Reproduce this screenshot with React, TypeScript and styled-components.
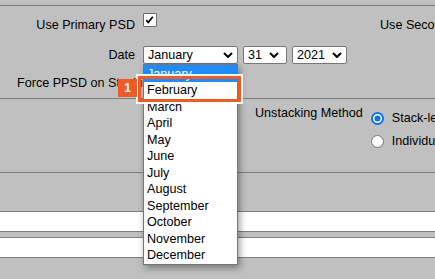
import React from 'react';
import styled, { createGlobalStyle } from 'styled-components';

const Global = createGlobalStyle`
  html, body { margin: 0; padding: 0; background: #c0c0c0; }
  body {
    font-family: "Liberation Sans", Arial, sans-serif;
    font-size: 12.6px;
    color: #000;
  }
  * { box-sizing: border-box; }
`;

const Page = styled.div`
  position: relative;
  width: 435px;
  height: 279px;
  overflow: hidden;
  padding-top: 5px;
`;

const Section = styled.section<{ $h: number }>`
  border-top: 1px solid #7d7d7d;
  height: ${p => p.$h}px;
`;

const TopSection = styled(Section)`
  padding-top: 7px;
`;

const Row1 = styled.div`
  display: grid;
  grid-template-columns: 135px 229px auto;
  column-gap: 8px;
  align-items: start;
  white-space: nowrap;
`;

const Label = styled.div`
  line-height: 15px;
  padding-top: ${p => (p as any).$pt ?? 0}px;
  text-align: right;
  white-space: nowrap;
`;

const TopLabel = styled(Label)`
  padding-top: 5px;
`;

const SideLabel = styled.div`
  line-height: 15px;
  padding-top: 5px;
  white-space: nowrap;
`;

const CheckBox = styled.span`
  display: block;
  width: 14px;
  height: 14px;
  background: #fff;
  border: 1px solid #6d6d6d;
  border-radius: 1px;
  svg { display: block; }
`;

const Row2 = styled.div`
  margin-top: 13px;
  display: grid;
  grid-template-columns: 135px auto;
  column-gap: 8px;
  align-items: center;
`;

const Selects = styled.div`
  display: flex;
  gap: 5px;
`;

const SelectWrap = styled.div`
  position: relative;
`;

const SelectBox = styled.div<{ $w: number; $gap: number }>`
  width: ${p => p.$w}px;
  height: 18px;
  background: #fff;
  border: 1px solid #767676;
  border-radius: 2px;
  padding: 0 ${p => p.$gap}px 0 4px;
  display: flex;
  align-items: center;
  justify-content: space-between;
  line-height: 15px;
  svg { display: block; flex: none; }
`;

const Row3 = styled.div`
  margin-top: 12px;
  padding-left: 17px;
  line-height: 15px;
  white-space: nowrap;
`;

const List = styled.ul`
  position: absolute;
  z-index: 5;
  top: 18px;
  left: 0;
  width: 95px;
  margin: 0;
  padding: 0 0 1px 0;
  list-style: none;
  background: #fff;
  border: 1px solid #767676;
  box-shadow: 2px 3px 7px rgba(0, 0, 0, 0.38);
`;

const Item = styled.li<{ $sel?: boolean }>`
  height: 16.53px;
  line-height: 16.53px;
  padding: 0.6px 0 0 3px;
  white-space: nowrap;
  background: ${p => (p.$sel ? '#1e8cff' : 'transparent')};
  color: ${p => (p.$sel ? '#fff' : '#000')};
`;

const MiddleSection = styled(Section)`
  display: flex;
  align-items: flex-start;
  padding: 7px 0 0 255px;
`;

const MethodLabel = styled.div`
  line-height: 15px;
  white-space: nowrap;
`;

const RadioGroup = styled.div`
  margin: 1px 0 0 8px;
  display: flex;
  flex-direction: column;
`;

const RadioRow = styled.div`
  height: 23px;
  display: flex;
  align-items: center;
  gap: 8px;
  white-space: nowrap;
  line-height: 15px;
`;

const Radio = styled.span<{ $on?: boolean }>`
  flex: none;
  width: 13px;
  height: 13px;
  border-radius: 50%;
  border: ${p => (p.$on ? '2px solid #0a72f5' : '1px solid #767676')};
  background: ${p =>
    p.$on ? 'radial-gradient(circle, #0a72f5 0 2.8px, #fff 3.3px)' : '#fff'};
`;

const BottomSection = styled(Section)`
  padding-top: 38px;
  display: flex;
  flex-direction: column;
  gap: 5px;
`;

const Field = styled.div`
  height: 21px;
  background: #fff;
  border-top: 1px solid #7d7d7d;
  border-bottom: 1px solid #7d7d7d;
`;

const Callout = styled.div`
  position: absolute;
  z-index: 10;
  left: 138px;
  top: 76px;
  width: 103px;
  height: 26px;
  border: 3px solid #f05a24;
  box-shadow: 0 0 0 2px #fff;
`;

const Badge = styled.div`
  position: absolute;
  z-index: 11;
  left: 118px;
  top: 79px;
  width: 19px;
  height: 18px;
  background: #f05a24;
  color: #fff;
  font-family: "Liberation Sans", Arial, sans-serif;
  font-weight: bold;
  font-size: 12px;
  display: flex;
  align-items: center;
  justify-content: center;
`;

const Chevron = () => (
  <svg width="10" height="6" viewBox="0 0 10 6">
    <path d="M1 1 L5 5 L9 1" fill="none" stroke="#000" strokeWidth="2" />
  </svg>
);

const months = [
  'January', 'February', 'March', 'April', 'May', 'June',
  'July', 'August', 'September', 'October', 'November', 'December',
];

export default function App() {
  return (
    <>
      <Global />
      <Page>
        <TopSection $h={93}>
          <Row1>
            <TopLabel>Use Primary PSD</TopLabel>
            <CheckBox>
              <svg width="12" height="12" viewBox="0 0 12 12">
                <path d="M2.2 6.2 L4.3 8.4 L8.8 2.8" fill="none" stroke="#000" strokeWidth="1.7" />
              </svg>
            </CheckBox>
            <SideLabel>Use Secondary PSD</SideLabel>
          </Row1>
          <Row2>
            <Label>Date</Label>
            <Selects>
              <SelectWrap>
                <SelectBox $w={95} $gap={4}>
                  <span>January</span>
                  <Chevron />
                </SelectBox>
                <List>
                  {months.map((m, i) => (
                    <Item key={m} $sel={i === 0}>{m}</Item>
                  ))}
                </List>
              </SelectWrap>
              <SelectBox $w={44} $gap={7}>
                <span>31</span>
                <Chevron />
              </SelectBox>
              <SelectBox $w={55} $gap={4}>
                <span>2021</span>
                <Chevron />
              </SelectBox>
            </Selects>
          </Row2>
          <Row3>Force PPSD on Stacking</Row3>
        </TopSection>
        <MiddleSection $h={74}>
          <MethodLabel>Unstacking Method</MethodLabel>
          <RadioGroup>
            <RadioRow>
              <Radio $on />
              <span>Stack-level</span>
            </RadioRow>
            <RadioRow>
              <Radio />
              <span>Individual</span>
            </RadioRow>
          </RadioGroup>
        </MiddleSection>
        <BottomSection $h={120}>
          <Field />
          <Field />
        </BottomSection>
        <Callout />
        <Badge>1</Badge>
      </Page>
    </>
  );
}
